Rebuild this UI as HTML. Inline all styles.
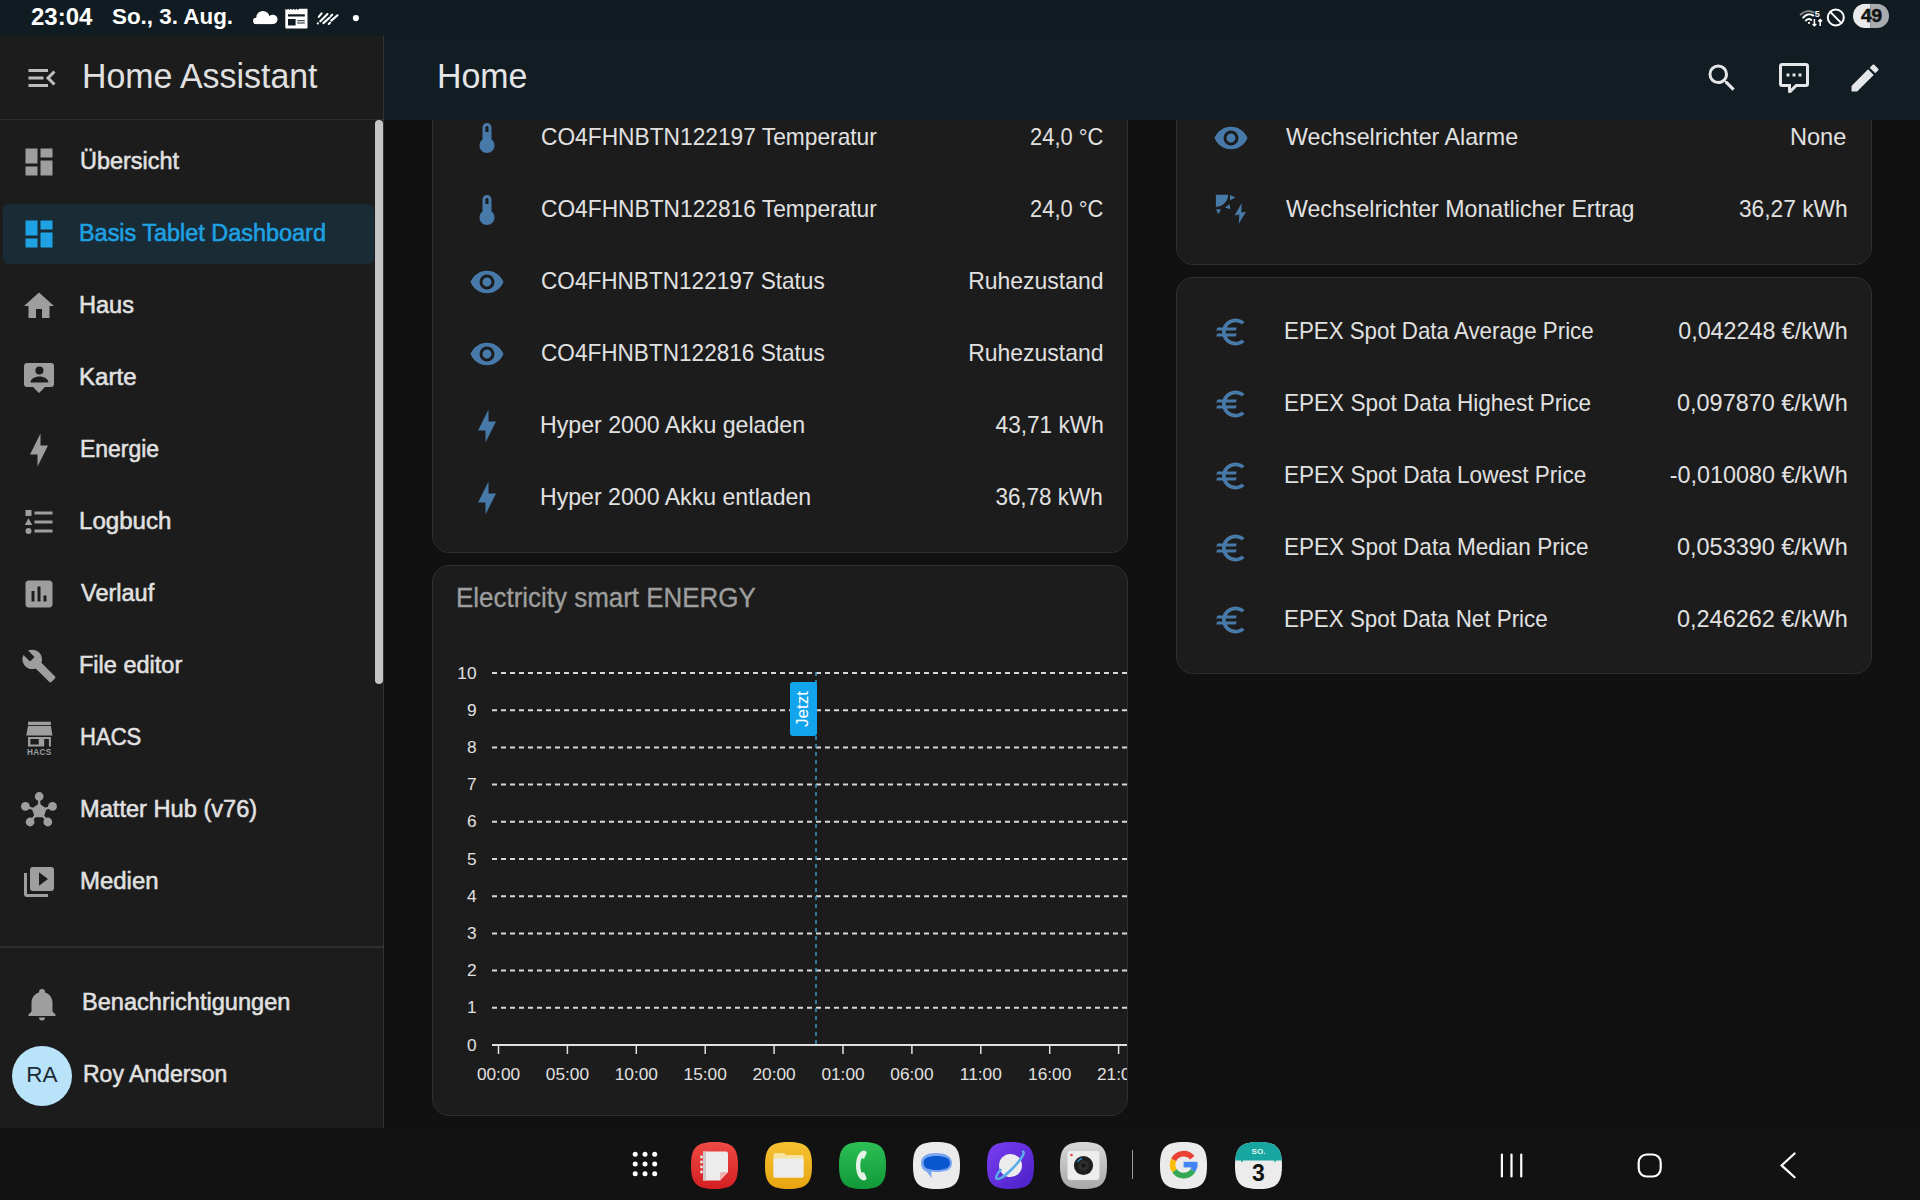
<!DOCTYPE html>
<html><head><meta charset="utf-8"><style>
html,body{margin:0;padding:0;width:1920px;height:1200px;overflow:hidden;background:#111;font-family:"Liberation Sans",sans-serif}
.t{position:absolute;white-space:nowrap;font-family:"Liberation Sans",sans-serif}
svg{display:block}
</style></head><body>
<div style="position:absolute;left:384px;top:120px;width:1536px;height:1008px;background:#111111"></div>
<div style="position:absolute;left:432px;top:60px;width:694px;height:491px;background:#1c1c1c;border:1px solid #2e2e2e;border-radius:17px"></div>
<div style="position:absolute;left:432px;top:565px;width:694px;height:549px;background:#1c1c1c;border:1px solid #2e2e2e;border-radius:17px"></div>
<div style="position:absolute;left:1176px;top:60px;width:694px;height:203px;background:#1c1c1c;border:1px solid #2e2e2e;border-radius:17px"></div>
<div style="position:absolute;left:1176px;top:277px;width:694px;height:395px;background:#1c1c1c;border:1px solid #2e2e2e;border-radius:17px"></div>
<svg style="position:absolute;left:469.0px;top:119.5px;" width="36" height="36" viewBox="0 0 24 24"><path fill="#4779a9" fill-rule="evenodd" d="M15 13V5C15 3.34 13.66 2 12 2S9 3.34 9 5V13C7.79 13.91 7 15.37 7 17C7 19.76 9.24 22 12 22S17 19.76 17 17C17 15.37 16.21 13.91 15 13M11 5C11 4.45 11.45 4 12 4S13 4.45 13 5V8H11V5Z"/></svg>
<div class="t" style="left:540.8px;top:124.5px;font-size:24.0px;line-height:24.0px;color:#e1e1e1;font-weight:400;transform:scaleX(0.9477);transform-origin:0 0;">CO4FHNBTN122197 Temperatur</div>
<div class="t" style="right:817.0px;text-align:right;top:124.5px;font-size:24.0px;line-height:24.0px;color:#e1e1e1;font-weight:400;transform:scaleX(0.9120);transform-origin:100% 0;">24,0 °C</div>
<svg style="position:absolute;left:469.0px;top:191.5px;" width="36" height="36" viewBox="0 0 24 24"><path fill="#4779a9" fill-rule="evenodd" d="M15 13V5C15 3.34 13.66 2 12 2S9 3.34 9 5V13C7.79 13.91 7 15.37 7 17C7 19.76 9.24 22 12 22S17 19.76 17 17C17 15.37 16.21 13.91 15 13M11 5C11 4.45 11.45 4 12 4S13 4.45 13 5V8H11V5Z"/></svg>
<div class="t" style="left:540.8px;top:196.5px;font-size:24.0px;line-height:24.0px;color:#e1e1e1;font-weight:400;transform:scaleX(0.9477);transform-origin:0 0;">CO4FHNBTN122816 Temperatur</div>
<div class="t" style="right:817.0px;text-align:right;top:196.5px;font-size:24.0px;line-height:24.0px;color:#e1e1e1;font-weight:400;transform:scaleX(0.9120);transform-origin:100% 0;">24,0 °C</div>
<svg style="position:absolute;left:469.0px;top:263.5px;" width="36" height="36" viewBox="0 0 24 24"><path fill="#4779a9" fill-rule="evenodd" d="M12,9A3,3 0 0,0 9,12A3,3 0 0,0 12,15A3,3 0 0,0 15,12A3,3 0 0,0 12,9M12,17A5,5 0 0,1 7,12A5,5 0 0,1 12,7A5,5 0 0,1 17,12A5,5 0 0,1 12,17M12,4.5C7,4.5 2.73,7.61 1,12C2.73,16.39 7,19.5 12,19.5C17,19.5 21.27,16.39 23,12C21.27,7.61 17,4.5 12,4.5Z"/></svg>
<div class="t" style="left:540.5px;top:268.5px;font-size:24.0px;line-height:24.0px;color:#e1e1e1;font-weight:400;transform:scaleX(0.9410);transform-origin:0 0;">CO4FHNBTN122197 Status</div>
<div class="t" style="right:816.6px;text-align:right;top:268.5px;font-size:24.0px;line-height:24.0px;color:#e1e1e1;font-weight:400;transform:scaleX(0.9554);transform-origin:100% 0;">Ruhezustand</div>
<svg style="position:absolute;left:469.0px;top:335.5px;" width="36" height="36" viewBox="0 0 24 24"><path fill="#4779a9" fill-rule="evenodd" d="M12,9A3,3 0 0,0 9,12A3,3 0 0,0 12,15A3,3 0 0,0 15,12A3,3 0 0,0 12,9M12,17A5,5 0 0,1 7,12A5,5 0 0,1 12,7A5,5 0 0,1 17,12A5,5 0 0,1 12,17M12,4.5C7,4.5 2.73,7.61 1,12C2.73,16.39 7,19.5 12,19.5C17,19.5 21.27,16.39 23,12C21.27,7.61 17,4.5 12,4.5Z"/></svg>
<div class="t" style="left:540.5px;top:340.5px;font-size:24.0px;line-height:24.0px;color:#e1e1e1;font-weight:400;transform:scaleX(0.9410);transform-origin:0 0;">CO4FHNBTN122816 Status</div>
<div class="t" style="right:816.6px;text-align:right;top:340.5px;font-size:24.0px;line-height:24.0px;color:#e1e1e1;font-weight:400;transform:scaleX(0.9554);transform-origin:100% 0;">Ruhezustand</div>
<svg style="position:absolute;left:469.0px;top:407.5px;" width="36" height="36" viewBox="0 0 24 24"><path fill="#4779a9" fill-rule="evenodd" d="M11 15H6L13 1V9H18L11 23V15Z"/></svg>
<div class="t" style="left:539.5px;top:412.5px;font-size:24.0px;line-height:24.0px;color:#e1e1e1;font-weight:400;transform:scaleX(0.9644);transform-origin:0 0;">Hyper 2000 Akku geladen</div>
<div class="t" style="right:816.6px;text-align:right;top:412.5px;font-size:24.0px;line-height:24.0px;color:#e1e1e1;font-weight:400;transform:scaleX(0.9426);transform-origin:100% 0;">43,71 kWh</div>
<svg style="position:absolute;left:469.0px;top:479.5px;" width="36" height="36" viewBox="0 0 24 24"><path fill="#4779a9" fill-rule="evenodd" d="M11 15H6L13 1V9H18L11 23V15Z"/></svg>
<div class="t" style="left:539.5px;top:484.5px;font-size:24.0px;line-height:24.0px;color:#e1e1e1;font-weight:400;transform:scaleX(0.9633);transform-origin:0 0;">Hyper 2000 Akku entladen</div>
<div class="t" style="right:817.6px;text-align:right;top:484.5px;font-size:24.0px;line-height:24.0px;color:#e1e1e1;font-weight:400;transform:scaleX(0.9355);transform-origin:100% 0;">36,78 kWh</div>
<svg style="position:absolute;left:1213.0px;top:119.5px;" width="36" height="36" viewBox="0 0 24 24"><path fill="#4779a9" fill-rule="evenodd" d="M12,9A3,3 0 0,0 9,12A3,3 0 0,0 12,15A3,3 0 0,0 15,12A3,3 0 0,0 12,9M12,17A5,5 0 0,1 7,12A5,5 0 0,1 12,7A5,5 0 0,1 17,12A5,5 0 0,1 12,17M12,4.5C7,4.5 2.73,7.61 1,12C2.73,16.39 7,19.5 12,19.5C17,19.5 21.27,16.39 23,12C21.27,7.61 17,4.5 12,4.5Z"/></svg>
<div class="t" style="left:1285.5px;top:124.5px;font-size:24.0px;line-height:24.0px;color:#e1e1e1;font-weight:400;transform:scaleX(0.9688);transform-origin:0 0;">Wechselrichter Alarme</div>
<div class="t" style="right:73.2px;text-align:right;top:124.5px;font-size:24.0px;line-height:24.0px;color:#e1e1e1;font-weight:400;transform:scaleX(0.9836);transform-origin:100% 0;">None</div>
<svg style="position:absolute;left:1205px;top:185px;" width="50" height="50" viewBox="0 0 50 50"><g fill="#4779a9"><path d="M10.9 9.8H23.1A12.2 12.1 0 0 1 10.9 21.9Z"/><path d="M25 10L30.6 12.5L25 15.2Z"/><path d="M20 22.5L24.6 19.2L25.4 24.2Z"/><path d="M11 24.2L16 24.2L13.3 29.2Z"/><path d="M36.7 17.9L29.6 30.4L34.3 29.6L33.75 38.75L41 26.7L36.4 27.4Z"/></g></svg>
<div class="t" style="left:1285.5px;top:196.5px;font-size:24.0px;line-height:24.0px;color:#e1e1e1;font-weight:400;transform:scaleX(0.9653);transform-origin:0 0;">Wechselrichter Monatlicher Ertrag</div>
<div class="t" style="right:72.2px;text-align:right;top:196.5px;font-size:24.0px;line-height:24.0px;color:#e1e1e1;font-weight:400;transform:scaleX(0.9484);transform-origin:100% 0;">36,27 kWh</div>
<svg style="position:absolute;left:1213.0px;top:314.0px;" width="36" height="36" viewBox="0 0 24 24"><path fill="#4779a9" fill-rule="evenodd" d="M15,18.5C12.49,18.5 10.32,17.08 9.24,15H15L16,13H8.58C8.53,12.67 8.5,12.34 8.5,12C8.5,11.66 8.53,11.33 8.58,11H15L16,9H9.24C10.32,6.92 12.5,5.5 15,5.5C16.61,5.5 18.09,6.09 19.23,7.07L21,5.3C19.41,3.87 17.3,3 15,3C11.08,3 7.760,5.5 6.52,9H3L2,11H6.06C6.02,11.33 6,11.66 6,12C6,12.34 6.02,12.67 6.06,13H3L2,15H6.52C7.76,18.5 11.08,21 15,21C17.31,21 19.41,20.13 21,18.7L19.22,16.93C18.09,17.91 16.62,18.5 15,18.5Z"/></svg>
<div class="t" style="left:1284.0px;top:319.0px;font-size:24.0px;line-height:24.0px;color:#e1e1e1;font-weight:400;transform:scaleX(0.9297);transform-origin:0 0;">EPEX Spot Data Average Price</div>
<div class="t" style="right:72.0px;text-align:right;top:319.0px;font-size:24.0px;line-height:24.0px;color:#e1e1e1;font-weight:400;transform:scaleX(0.9702);transform-origin:100% 0;">0,042248 €/kWh</div>
<svg style="position:absolute;left:1213.0px;top:386.0px;" width="36" height="36" viewBox="0 0 24 24"><path fill="#4779a9" fill-rule="evenodd" d="M15,18.5C12.49,18.5 10.32,17.08 9.24,15H15L16,13H8.58C8.53,12.67 8.5,12.34 8.5,12C8.5,11.66 8.53,11.33 8.58,11H15L16,9H9.24C10.32,6.92 12.5,5.5 15,5.5C16.61,5.5 18.09,6.09 19.23,7.07L21,5.3C19.41,3.87 17.3,3 15,3C11.08,3 7.760,5.5 6.52,9H3L2,11H6.06C6.02,11.33 6,11.66 6,12C6,12.34 6.02,12.67 6.06,13H3L2,15H6.52C7.76,18.5 11.08,21 15,21C17.31,21 19.41,20.13 21,18.7L19.22,16.93C18.09,17.91 16.62,18.5 15,18.5Z"/></svg>
<div class="t" style="left:1283.8px;top:391.0px;font-size:24.0px;line-height:24.0px;color:#e1e1e1;font-weight:400;transform:scaleX(0.9395);transform-origin:0 0;">EPEX Spot Data Highest Price</div>
<div class="t" style="right:72.1px;text-align:right;top:391.0px;font-size:24.0px;line-height:24.0px;color:#e1e1e1;font-weight:400;transform:scaleX(0.9771);transform-origin:100% 0;">0,097870 €/kWh</div>
<svg style="position:absolute;left:1213.0px;top:458.0px;" width="36" height="36" viewBox="0 0 24 24"><path fill="#4779a9" fill-rule="evenodd" d="M15,18.5C12.49,18.5 10.32,17.08 9.24,15H15L16,13H8.58C8.53,12.67 8.5,12.34 8.5,12C8.5,11.66 8.53,11.33 8.58,11H15L16,9H9.24C10.32,6.92 12.5,5.5 15,5.5C16.61,5.5 18.09,6.09 19.23,7.07L21,5.3C19.41,3.87 17.3,3 15,3C11.08,3 7.760,5.5 6.52,9H3L2,11H6.06C6.02,11.33 6,11.66 6,12C6,12.34 6.02,12.67 6.06,13H3L2,15H6.52C7.76,18.5 11.08,21 15,21C17.31,21 19.41,20.13 21,18.7L19.22,16.93C18.09,17.91 16.62,18.5 15,18.5Z"/></svg>
<div class="t" style="left:1283.8px;top:463.0px;font-size:24.0px;line-height:24.0px;color:#e1e1e1;font-weight:400;transform:scaleX(0.9400);transform-origin:0 0;">EPEX Spot Data Lowest Price</div>
<div class="t" style="right:72.1px;text-align:right;top:463.0px;font-size:24.0px;line-height:24.0px;color:#e1e1e1;font-weight:400;transform:scaleX(0.9746);transform-origin:100% 0;">-0,010080 €/kWh</div>
<svg style="position:absolute;left:1213.0px;top:530.0px;" width="36" height="36" viewBox="0 0 24 24"><path fill="#4779a9" fill-rule="evenodd" d="M15,18.5C12.49,18.5 10.32,17.08 9.24,15H15L16,13H8.58C8.53,12.67 8.5,12.34 8.5,12C8.5,11.66 8.53,11.33 8.58,11H15L16,9H9.24C10.32,6.92 12.5,5.5 15,5.5C16.61,5.5 18.09,6.09 19.23,7.07L21,5.3C19.41,3.87 17.3,3 15,3C11.08,3 7.760,5.5 6.52,9H3L2,11H6.06C6.02,11.33 6,11.66 6,12C6,12.34 6.02,12.67 6.06,13H3L2,15H6.52C7.76,18.5 11.08,21 15,21C17.31,21 19.41,20.13 21,18.7L19.22,16.93C18.09,17.91 16.62,18.5 15,18.5Z"/></svg>
<div class="t" style="left:1283.8px;top:535.0px;font-size:24.0px;line-height:24.0px;color:#e1e1e1;font-weight:400;transform:scaleX(0.9394);transform-origin:0 0;">EPEX Spot Data Median Price</div>
<div class="t" style="right:72.1px;text-align:right;top:535.0px;font-size:24.0px;line-height:24.0px;color:#e1e1e1;font-weight:400;transform:scaleX(0.9771);transform-origin:100% 0;">0,053390 €/kWh</div>
<svg style="position:absolute;left:1213.0px;top:602.0px;" width="36" height="36" viewBox="0 0 24 24"><path fill="#4779a9" fill-rule="evenodd" d="M15,18.5C12.49,18.5 10.32,17.08 9.24,15H15L16,13H8.58C8.53,12.67 8.5,12.34 8.5,12C8.5,11.66 8.53,11.33 8.58,11H15L16,9H9.24C10.32,6.92 12.5,5.5 15,5.5C16.61,5.5 18.09,6.09 19.23,7.07L21,5.3C19.41,3.87 17.3,3 15,3C11.08,3 7.760,5.5 6.52,9H3L2,11H6.06C6.02,11.33 6,11.66 6,12C6,12.34 6.02,12.67 6.06,13H3L2,15H6.52C7.76,18.5 11.08,21 15,21C17.31,21 19.41,20.13 21,18.7L19.22,16.93C18.09,17.91 16.62,18.5 15,18.5Z"/></svg>
<div class="t" style="left:1283.8px;top:607.0px;font-size:24.0px;line-height:24.0px;color:#e1e1e1;font-weight:400;transform:scaleX(0.9325);transform-origin:0 0;">EPEX Spot Data Net Price</div>
<div class="t" style="right:72.1px;text-align:right;top:607.0px;font-size:24.0px;line-height:24.0px;color:#e1e1e1;font-weight:400;transform:scaleX(0.9771);transform-origin:100% 0;">0,246262 €/kWh</div>
<div class="t" style="left:456.0px;top:583.8px;font-size:27.4px;line-height:27.4px;color:#9e9e9e;font-weight:400;-webkit-text-stroke:0.35px #9e9e9e;transform:scaleX(0.9471);transform-origin:0 0;">Electricity smart ENERGY</div>
<svg style="position:absolute;left:0px;top:0px;" width="1920" height="1200" viewBox="0 0 1920 1200"><line x1="492" y1="1045.0" x2="1127" y2="1045.0" stroke="#e0e0e0" stroke-width="2"/><line x1="492" y1="1007.8" x2="1127" y2="1007.8" stroke="#d8d8d8" stroke-width="2" stroke-dasharray="5 4"/><line x1="492" y1="970.6" x2="1127" y2="970.6" stroke="#d8d8d8" stroke-width="2" stroke-dasharray="5 4"/><line x1="492" y1="933.4" x2="1127" y2="933.4" stroke="#d8d8d8" stroke-width="2" stroke-dasharray="5 4"/><line x1="492" y1="896.2" x2="1127" y2="896.2" stroke="#d8d8d8" stroke-width="2" stroke-dasharray="5 4"/><line x1="492" y1="859.0" x2="1127" y2="859.0" stroke="#d8d8d8" stroke-width="2" stroke-dasharray="5 4"/><line x1="492" y1="821.8" x2="1127" y2="821.8" stroke="#d8d8d8" stroke-width="2" stroke-dasharray="5 4"/><line x1="492" y1="784.6" x2="1127" y2="784.6" stroke="#d8d8d8" stroke-width="2" stroke-dasharray="5 4"/><line x1="492" y1="747.4" x2="1127" y2="747.4" stroke="#d8d8d8" stroke-width="2" stroke-dasharray="5 4"/><line x1="492" y1="710.2" x2="1127" y2="710.2" stroke="#d8d8d8" stroke-width="2" stroke-dasharray="5 4"/><line x1="492" y1="673.0" x2="1127" y2="673.0" stroke="#d8d8d8" stroke-width="2" stroke-dasharray="5 4"/><line x1="498.5" y1="1045" x2="498.5" y2="1054" stroke="#e0e0e0" stroke-width="1.5"/><line x1="567.4" y1="1045" x2="567.4" y2="1054" stroke="#e0e0e0" stroke-width="1.5"/><line x1="636.3" y1="1045" x2="636.3" y2="1054" stroke="#e0e0e0" stroke-width="1.5"/><line x1="705.2" y1="1045" x2="705.2" y2="1054" stroke="#e0e0e0" stroke-width="1.5"/><line x1="774.1" y1="1045" x2="774.1" y2="1054" stroke="#e0e0e0" stroke-width="1.5"/><line x1="843.0" y1="1045" x2="843.0" y2="1054" stroke="#e0e0e0" stroke-width="1.5"/><line x1="911.9" y1="1045" x2="911.9" y2="1054" stroke="#e0e0e0" stroke-width="1.5"/><line x1="980.8" y1="1045" x2="980.8" y2="1054" stroke="#e0e0e0" stroke-width="1.5"/><line x1="1049.7" y1="1045" x2="1049.7" y2="1054" stroke="#e0e0e0" stroke-width="1.5"/><line x1="1118.6" y1="1045" x2="1118.6" y2="1054" stroke="#e0e0e0" stroke-width="1.5"/><line x1="816" y1="672" x2="816" y2="1045" stroke="#3499d2" stroke-width="1.5" stroke-dasharray="4 4"/></svg>
<div class="t" style="right:1443.5px;text-align:right;top:1036.6px;font-size:17.3px;line-height:17.3px;color:#e1e1e1;font-weight:400;">0</div>
<div class="t" style="right:1443.5px;text-align:right;top:999.4px;font-size:17.3px;line-height:17.3px;color:#e1e1e1;font-weight:400;">1</div>
<div class="t" style="right:1443.5px;text-align:right;top:962.2px;font-size:17.3px;line-height:17.3px;color:#e1e1e1;font-weight:400;">2</div>
<div class="t" style="right:1443.5px;text-align:right;top:925.0px;font-size:17.3px;line-height:17.3px;color:#e1e1e1;font-weight:400;">3</div>
<div class="t" style="right:1443.5px;text-align:right;top:887.8px;font-size:17.3px;line-height:17.3px;color:#e1e1e1;font-weight:400;">4</div>
<div class="t" style="right:1443.5px;text-align:right;top:850.6px;font-size:17.3px;line-height:17.3px;color:#e1e1e1;font-weight:400;">5</div>
<div class="t" style="right:1443.5px;text-align:right;top:813.4px;font-size:17.3px;line-height:17.3px;color:#e1e1e1;font-weight:400;">6</div>
<div class="t" style="right:1443.5px;text-align:right;top:776.2px;font-size:17.3px;line-height:17.3px;color:#e1e1e1;font-weight:400;">7</div>
<div class="t" style="right:1443.5px;text-align:right;top:739.0px;font-size:17.3px;line-height:17.3px;color:#e1e1e1;font-weight:400;">8</div>
<div class="t" style="right:1443.5px;text-align:right;top:701.8px;font-size:17.3px;line-height:17.3px;color:#e1e1e1;font-weight:400;">9</div>
<div class="t" style="right:1443.5px;text-align:right;top:664.6px;font-size:17.3px;line-height:17.3px;color:#e1e1e1;font-weight:400;">10</div>
<div style="position:absolute;left:432px;top:1050px;width:695px;height:40px;overflow:hidden">
<div class="t" style="left:6.5px;width:120px;text-align:center;top:16.0px;font-size:17.3px;line-height:17.3px;color:#e1e1e1">00:00</div>
<div class="t" style="left:75.4px;width:120px;text-align:center;top:16.0px;font-size:17.3px;line-height:17.3px;color:#e1e1e1">05:00</div>
<div class="t" style="left:144.3px;width:120px;text-align:center;top:16.0px;font-size:17.3px;line-height:17.3px;color:#e1e1e1">10:00</div>
<div class="t" style="left:213.2px;width:120px;text-align:center;top:16.0px;font-size:17.3px;line-height:17.3px;color:#e1e1e1">15:00</div>
<div class="t" style="left:282.1px;width:120px;text-align:center;top:16.0px;font-size:17.3px;line-height:17.3px;color:#e1e1e1">20:00</div>
<div class="t" style="left:351.0px;width:120px;text-align:center;top:16.0px;font-size:17.3px;line-height:17.3px;color:#e1e1e1">01:00</div>
<div class="t" style="left:419.9px;width:120px;text-align:center;top:16.0px;font-size:17.3px;line-height:17.3px;color:#e1e1e1">06:00</div>
<div class="t" style="left:488.8px;width:120px;text-align:center;top:16.0px;font-size:17.3px;line-height:17.3px;color:#e1e1e1">11:00</div>
<div class="t" style="left:557.7px;width:120px;text-align:center;top:16.0px;font-size:17.3px;line-height:17.3px;color:#e1e1e1">16:00</div>
<div class="t" style="left:626.6px;width:120px;text-align:center;top:16.0px;font-size:17.3px;line-height:17.3px;color:#e1e1e1">21:00</div>
</div>
<div style="position:absolute;left:790px;top:682px;width:27px;height:54px;background:#12a4ec;border-radius:3px"></div>
<div class="t" style="left:776px;top:700px;width:54px;height:18px;font-size:17px;line-height:18px;text-align:center;color:#fff;transform:rotate(-90deg)">Jetzt</div>
<div style="position:absolute;left:384px;top:36px;width:1536px;height:84px;background:#111c23"></div>
<div class="t" style="left:436.9px;top:58.3px;font-size:35.0px;line-height:35.0px;color:#e4e6e8;font-weight:400;transform:scaleX(0.9690);transform-origin:0 0;">Home</div>
<svg style="position:absolute;left:1703.5px;top:59.7px;" width="36" height="36" viewBox="0 0 24 24"><path fill="#e4e6e8" fill-rule="evenodd" d="M9.5,3A6.5,6.5 0 0,1 16,9.5C16,11.11 15.41,12.59 14.44,13.73L14.71,14H15.5L20.5,19L19,20.5L14,15.5V14.71L13.73,14.44C12.59,15.41 11.11,16 9.5,16A6.5,6.5 0 0,1 3,9.5A6.5,6.5 0 0,1 9.5,3M9.5,5C7,5 5,7 5,9.5C5,12 7,14 9.5,14C12,14 14,12 14,9.5C14,7 12,5 9.5,5Z"/></svg>
<svg style="position:absolute;left:1776.0px;top:59.9px;" width="36" height="36" viewBox="0 0 24 24"><path fill="#e4e6e8" fill-rule="evenodd" d="M9,22A1,1 0 0,1 8,21V18H4A2,2 0 0,1 2,16V4C2,2.89 2.9,2 4,2H20A2,2 0 0,1 22,4V16A2,2 0 0,1 20,18H13.9L10.2,21.71C10,21.9 9.75,22 9.5,22V22H9M10,16V19.08L13.08,16H20V4H4V16H10M17,11H15V9H17V11M13,11H11V9H13V11M9,11H7V9H9V11Z"/></svg>
<svg style="position:absolute;left:1847.4px;top:60.0px;" width="36" height="36" viewBox="0 0 24 24"><path fill="#e4e6e8" fill-rule="evenodd" d="M20.71,7.04C21.1,6.65 21.1,6 20.71,5.63L18.37,3.29C18,2.9 17.35,2.9 16.96,3.29L15.12,5.12L18.87,8.87M3,17.25V21H6.75L17.81,9.93L14.06,6.18L3,17.25Z"/></svg>
<div style="position:absolute;left:0px;top:36px;width:384px;height:1092px;background:#1c1c1c"></div>
<div style="position:absolute;left:383px;top:36px;width:1px;height:1092px;background:#333333"></div>
<div style="position:absolute;left:0px;top:119px;width:383px;height:1px;background:#2f2f2f"></div>
<svg style="position:absolute;left:23.5px;top:59.8px;" width="36" height="36" viewBox="0 0 24 24"><path fill="#bdbdbd" fill-rule="evenodd" d="M21,15.61L19.59,17L14.58,12L19.59,7L21,8.39L17.44,12L21,15.61M3,6H16V8H3V6M3,13V11H13V13H3M3,18V16H16V18H3Z"/></svg>
<div class="t" style="left:81.6px;top:58.0px;font-size:35.3px;line-height:35.3px;color:#e1e1e1;font-weight:400;transform:scaleX(0.9605);transform-origin:0 0;">Home Assistant</div>
<div style="position:absolute;left:375px;top:120px;width:8px;height:564px;background:#c4c4c4;border-radius:4px"></div>
<div style="position:absolute;left:3px;top:204px;width:371px;height:60px;background:#192c36;border-radius:6px"></div>
<svg style="position:absolute;left:20.6px;top:144.0px;" width="36" height="36" viewBox="0 0 24 24"><path fill="#9e9e9e" fill-rule="evenodd" d="M13,3V9H21V3M13,21H21V11H13M3,21H11V15H3M3,13H11V3H3V13Z"/></svg>
<div class="t" style="left:79.8px;top:148.5px;font-size:24.2px;line-height:24.2px;color:#e1e1e1;font-weight:400;-webkit-text-stroke:0.55px #e1e1e1;transform:scaleX(0.9687);transform-origin:0 0;">Übersicht</div>
<svg style="position:absolute;left:20.6px;top:216.0px;" width="36" height="36" viewBox="0 0 24 24"><path fill="#1ea2e4" fill-rule="evenodd" d="M13,3V9H21V3M13,21H21V11H13M3,21H11V15H3M3,13H11V3H3V13Z"/></svg>
<div class="t" style="left:78.8px;top:220.5px;font-size:24.2px;line-height:24.2px;color:#1ea2e4;font-weight:400;-webkit-text-stroke:0.55px #1ea2e4;transform:scaleX(0.9683);transform-origin:0 0;">Basis Tablet Dashboard</div>
<svg style="position:absolute;left:20.6px;top:288.0px;" width="36" height="36" viewBox="0 0 24 24"><path fill="#9e9e9e" fill-rule="evenodd" d="M10,20V14H14V20H19V12H22L12,3L2,12H5V20H10Z"/></svg>
<div class="t" style="left:79.4px;top:292.5px;font-size:24.2px;line-height:24.2px;color:#e1e1e1;font-weight:400;-webkit-text-stroke:0.55px #e1e1e1;transform:scaleX(0.9736);transform-origin:0 0;">Haus</div>
<svg style="position:absolute;left:20.6px;top:360.0px;" width="36" height="36" viewBox="0 0 24 24"><path fill="#9e9e9e" fill-rule="evenodd" d="M2,4C2,2.89 2.9,2 4,2H20A2,2 0 0,1 22,4V16A2,2 0 0,1 20,18H16L12,22L8,18H4A2,2 0 0,1 2,16V4M18.3,15C18.3,12.5 15.2,11 12.3,11C9.4,11 6.3,12.5 6.3,15H18.3M12.3,4.3A2.7,2.7 0 0,0 9.6,7A2.7,2.7 0 0,0 12.3,9.7A2.7,2.7 0 0,0 15,7A2.7,2.7 0 0,0 12.3,4.3Z"/></svg>
<div class="t" style="left:79.3px;top:364.5px;font-size:24.2px;line-height:24.2px;color:#e1e1e1;font-weight:400;-webkit-text-stroke:0.55px #e1e1e1;transform:scaleX(0.9949);transform-origin:0 0;">Karte</div>
<svg style="position:absolute;left:20.6px;top:432.0px;" width="36" height="36" viewBox="0 0 24 24"><path fill="#9e9e9e" fill-rule="evenodd" d="M11 15H6L13 1V9H18L11 23V15Z"/></svg>
<div class="t" style="left:80.4px;top:436.5px;font-size:24.2px;line-height:24.2px;color:#e1e1e1;font-weight:400;-webkit-text-stroke:0.55px #e1e1e1;transform:scaleX(0.9489);transform-origin:0 0;">Energie</div>
<svg style="position:absolute;left:20.6px;top:504.0px;" width="36" height="36" viewBox="0 0 24 24"><path fill="#9e9e9e" fill-rule="evenodd" d="M5,9.5L7.5,14H2.5L5,9.5M3,4H7V8H3V4M5,20A2,2 0 0,0 7,18A2,2 0 0,0 5,16A2,2 0 0,0 3,18A2,2 0 0,0 5,20M9,5V7H21V5H9M9,19H21V17H9V19M9,13H21V11H9V13Z"/></svg>
<div class="t" style="left:79.3px;top:508.5px;font-size:24.2px;line-height:24.2px;color:#e1e1e1;font-weight:400;-webkit-text-stroke:0.55px #e1e1e1;transform:scaleX(0.9966);transform-origin:0 0;">Logbuch</div>
<svg style="position:absolute;left:20.6px;top:576.0px;" width="36" height="36" viewBox="0 0 24 24"><path fill="#9e9e9e" fill-rule="evenodd" d="M19 3H5C3.9 3 3 3.9 3 5V19C3 20.1 3.9 21 5 21H19C20.1 21 21 20.1 21 19V5C21 3.9 20.1 3 19 3M9 17H7V10H9V17M13 17H11V7H13V17M17 17H15V13H17V17Z"/></svg>
<div class="t" style="left:81.4px;top:580.5px;font-size:24.2px;line-height:24.2px;color:#e1e1e1;font-weight:400;-webkit-text-stroke:0.55px #e1e1e1;transform:scaleX(0.9718);transform-origin:0 0;">Verlauf</div>
<svg style="position:absolute;left:20.6px;top:648.0px;" width="36" height="36" viewBox="0 0 24 24"><path fill="#9e9e9e" fill-rule="evenodd" d="M22.7,19L13.6,9.9C14.5,7.6 14,4.9 12.1,3C10.1,1 7.1,0.6 4.7,1.7L9,6L6,9L1.6,4.7C0.4,7.1 0.9,10.1 2.9,12.1C4.8,14 7.5,14.5 9.8,13.6L18.9,22.7C19.3,23.1 19.9,23.1 20.3,22.7L22.6,20.4C23.1,20 23.1,19.3 22.7,19Z"/></svg>
<div class="t" style="left:79.2px;top:652.5px;font-size:24.2px;line-height:24.2px;color:#e1e1e1;font-weight:400;-webkit-text-stroke:0.55px #e1e1e1;transform:scaleX(0.9722);transform-origin:0 0;">File editor</div>
<svg style="position:absolute;left:15px;top:710px;" width="50" height="125" viewBox="0 0 50 125"><g fill="#9e9e9e"><path d="M13 11.7H35.9V15.1H13Z"/><path d="M13 16.1H35.9L37.5 25.5H11.25Z"/><path fill-rule="evenodd" d="M13 26.9H35.9V36.5H13Z M15.4 29H23.75V34.4H15.4Z M29.2 29H33.9V36.5H29.2Z"/></g><text x="24.3" y="45.2" font-family="Liberation Sans" font-size="8.2" font-weight="700" letter-spacing="0.4" fill="#9e9e9e" text-anchor="middle">HACS</text></svg>
<div class="t" style="left:80.3px;top:724.5px;font-size:24.2px;line-height:24.2px;color:#e1e1e1;font-weight:400;-webkit-text-stroke:0.55px #e1e1e1;transform:scaleX(0.9125);transform-origin:0 0;">HACS</div>
<svg style="position:absolute;left:15px;top:710px;" width="50" height="125" viewBox="0 0 50 125"><g stroke="#9e9e9e" stroke-width="2.2"><path d="M24.2 101L24.2 86.5M24.2 101L10.4 96.4M24.2 101L37.5 96.4M24.2 101L15.1 112M24.2 101L32.8 112"/></g><g fill="#9e9e9e"><circle cx="24.2" cy="86.5" r="4.4"/><circle cx="10.4" cy="96.4" r="4.4"/><circle cx="37.5" cy="96.4" r="4.4"/><circle cx="15.1" cy="112" r="4.4"/><circle cx="32.8" cy="112" r="4.4"/><path d="M24.2 94.3L30.6 98.9L28.1 106.4H20.3L17.8 98.9Z" stroke="#9e9e9e" stroke-width="1.6" stroke-linejoin="round"/></g></svg>
<div class="t" style="left:79.8px;top:796.5px;font-size:24.2px;line-height:24.2px;color:#e1e1e1;font-weight:400;-webkit-text-stroke:0.55px #e1e1e1;transform:scaleX(0.9766);transform-origin:0 0;">Matter Hub (v76)</div>
<svg style="position:absolute;left:20.6px;top:864.0px;" width="36" height="36" viewBox="0 0 24 24"><path fill="#9e9e9e" fill-rule="evenodd" d="M4,6H2V20A2,2 0 0,0 4,22H18V20H4V6M20,2H8A2,2 0 0,0 6,4V16A2,2 0 0,0 8,18H20A2,2 0 0,0 22,16V4A2,2 0 0,0 20,2M12,14.5V5.5L18,10L12,14.5Z"/></svg>
<div class="t" style="left:80.1px;top:868.5px;font-size:24.2px;line-height:24.2px;color:#e1e1e1;font-weight:400;-webkit-text-stroke:0.55px #e1e1e1;transform:scaleX(0.9903);transform-origin:0 0;">Medien</div>
<div style="position:absolute;left:0px;top:946px;width:383px;height:1.5px;background:#2f2f2f"></div>
<svg style="position:absolute;left:23.5px;top:985.6px;" width="36" height="36" viewBox="0 0 24 24"><path fill="#9e9e9e" fill-rule="evenodd" d="M21,19V20H3V19L5,17V11C5,7.9 7.03,5.17 10,4.29C10,4.19 10,4.1 10,4A2,2 0 0,1 12,2A2,2 0 0,1 14,4C14,4.1 14,4.19 14,4.29C16.97,5.17 19,7.9 19,11V17L21,19M14,21A2,2 0 0,1 12,23A2,2 0 0,1 10,21"/></svg>
<div class="t" style="left:82.3px;top:989.5px;font-size:24.2px;line-height:24.2px;color:#e1e1e1;font-weight:400;-webkit-text-stroke:0.55px #e1e1e1;transform:scaleX(0.9745);transform-origin:0 0;">Benachrichtigungen</div>
<div style="position:absolute;left:12px;top:1046px;width:60px;height:60px;border-radius:50%;background:#b9e3f9"></div>
<div class="t" style="left:-258.0px;width:600px;text-align:center;top:1064.0px;font-size:22.5px;line-height:22.5px;color:#1d2b36;font-weight:400;">RA</div>
<div class="t" style="left:83.3px;top:1061.5px;font-size:24.2px;line-height:24.2px;color:#e1e1e1;font-weight:400;-webkit-text-stroke:0.55px #e1e1e1;transform:scaleX(0.9503);transform-origin:0 0;">Roy Anderson</div>
<div style="position:absolute;left:0px;top:0px;width:1920px;height:36px;background:#111c22"></div>
<div class="t" style="left:31.0px;top:5.0px;font-size:24px;line-height:24px;color:#fff;font-weight:700;">23:04</div>
<div class="t" style="left:112.0px;top:6.3px;font-size:22.4px;line-height:22.4px;color:#fff;font-weight:700;">So., 3. Aug.</div>
<svg style="position:absolute;left:245px;top:0px;" width="120" height="36" viewBox="0 0 120 36"><g fill="#fff">
<circle cx="11.3" cy="20.9" r="3.2"/><circle cx="17.9" cy="17.5" r="6.6"/><circle cx="27.8" cy="19.4" r="4.7"/><rect x="11.3" y="17.5" width="16.5" height="6.6"/>
<path fill-rule="evenodd" d="M40.3 8.8L41.7 10L43.1 8.8L44.5 10L45.9 8.8L47.3 10L48.7 8.8L50.1 10L51.5 8.8L52.9 10L54.3 8.8L62.5 8.8V27.4A1 1 0 0 1 61.5 28.4H41.3A1 1 0 0 1 40.3 27.4Z M43 14.3H59.8V16.6H43Z M43 19H50.6V25.6H43Z M52.2 20.3H59.8V21.3H52.2Z M52.2 22.6H59.8V23.4H52.2Z"/>
<circle cx="110.9" cy="18.1" r="3.1"/>
</g>
<g stroke="#fff" stroke-width="2.1" stroke-linecap="round" fill="none">
<path d="M72.8 23.4L72.9 23.3M73.75 16.9L76.6 13.4M75.3 21.25L82.5 14M78.4 23.1L84.7 17.5M85.9 15.9L87.2 14.7M83.75 24L85 22.8M86.25 20.6L92.5 15.3"/>
</g></svg>
<svg style="position:absolute;left:1790px;top:0px;" width="110" height="36" viewBox="0 0 110 36">
<g fill="none" stroke-linecap="round">
<path d="M10.6 14.6A11 11 0 0 1 23.5 12.4" stroke="#8a8d90" stroke-width="1.9"/>
<path d="M13.2 17.6A7.4 7.4 0 0 1 23.3 15.6" stroke="#fff" stroke-width="1.9"/>
<path d="M15.9 20.6A3.8 3.8 0 0 1 21.3 19.9" stroke="#fff" stroke-width="1.9"/>
<circle cx="45.8" cy="17.5" r="8" stroke="#fff" stroke-width="2"/>
<path d="M40.2 11.9L51.4 23.1" stroke="#fff" stroke-width="2"/>
</g>
<circle cx="19" cy="22.9" r="1.1" fill="#fff"/>
<text x="27.3" y="17.2" font-family="Liberation Sans" font-size="9" font-weight="700" fill="#fff" text-anchor="middle">5</text>
<g stroke="#fff" stroke-width="1.5" fill="none"><path d="M24.4 19v6.6M22.6 24L24.4 25.8L26.2 24M30.2 26V19.8M28.4 21.4L30.2 19.6L32 21.4"/></g>
<clipPath id="bp"><rect x="63" y="3.7" width="36" height="24.4" rx="12.2"/></clipPath>
<g clip-path="url(#bp)"><rect x="63" y="3.7" width="17.2" height="24.4" fill="#e8eaec"/><rect x="80.2" y="3.7" width="19" height="24.4" fill="#a9acaf"/></g>
<text x="81.6" y="22" font-family="Liberation Sans" font-size="19" font-weight="700" fill="#111" stroke="#111" stroke-width="0.5" text-anchor="middle">49</text>
</svg>
<div style="position:absolute;left:0px;top:1128px;width:1920px;height:72px;background:#121212"></div>
<svg style="position:absolute;left:0px;top:0px;" width="1920" height="1200" viewBox="0 0 1920 1200"><circle cx="635.2" cy="1154.2" r="2.5" fill="#fff"/><circle cx="635.2" cy="1164.1" r="2.5" fill="#fff"/><circle cx="635.2" cy="1173.7" r="2.5" fill="#fff"/><circle cx="645" cy="1154.2" r="2.5" fill="#fff"/><circle cx="645" cy="1164.1" r="2.5" fill="#fff"/><circle cx="645" cy="1173.7" r="2.5" fill="#fff"/><circle cx="654.7" cy="1154.2" r="2.5" fill="#fff"/><circle cx="654.7" cy="1164.1" r="2.5" fill="#fff"/><circle cx="654.7" cy="1173.7" r="2.5" fill="#fff"/></svg>
<svg style="position:absolute;left:690.6px;top:1142px;" width="47" height="47" viewBox="0 0 47 47"><defs><linearGradient id="gr" x1="0" y1="0" x2="0" y2="1"><stop offset="0" stop-color="#ee4a44"/><stop offset="1" stop-color="#d41f22"/></linearGradient></defs><path d="M23.5 0C41.5 0 47 5.5 47 23.5S41.5 47 23.5 47S0 41.5 0 23.5S5.5 0 23.5 0Z" fill="url(#gr)"/>
<path d="M12 9.5H35A2 2 0 0 1 37 11.5V30L29 38.5H12Z" fill="#ececec"/><path d="M29 38.5V32A2 2 0 0 1 31 30H37Z" fill="#f0b0b0"/><path d="M12 9.5h3v29h-3z" fill="#d0c8c8"/>
<g fill="#ececec"><circle cx="10.5" cy="15" r="1.4"/><circle cx="10.5" cy="20" r="1.4"/><circle cx="10.5" cy="25" r="1.4"/><circle cx="10.5" cy="30" r="1.4"/></g></svg>
<svg style="position:absolute;left:764.8px;top:1142px;" width="47" height="47" viewBox="0 0 47 47"><defs><linearGradient id="gy" x1="0" y1="0" x2="0" y2="1"><stop offset="0" stop-color="#f5c232"/><stop offset="1" stop-color="#e8a410"/></linearGradient></defs><path d="M23.5 0C41.5 0 47 5.5 47 23.5S41.5 47 23.5 47S0 41.5 0 23.5S5.5 0 23.5 0Z" fill="url(#gy)"/>
<path d="M8.5 12.5A1.5 1.5 0 0 1 10 11H19L21 13H37A1.5 1.5 0 0 1 38.5 14.5V34A1.5 1.5 0 0 1 37 35.5H10A1.5 1.5 0 0 1 8.5 34Z" fill="#f7e3a0"/><path d="M8.5 16.5H38.5V34A1.5 1.5 0 0 1 37 35.5H10A1.5 1.5 0 0 1 8.5 34Z" fill="#ececec"/></svg>
<svg style="position:absolute;left:838.8px;top:1142px;" width="47" height="47" viewBox="0 0 47 47"><defs><linearGradient id="gg" x1="0" y1="0" x2="0" y2="1"><stop offset="0" stop-color="#2cc055"/><stop offset="1" stop-color="#119838"/></linearGradient></defs><path d="M23.5 0C41.5 0 47 5.5 47 23.5S41.5 47 23.5 47S0 41.5 0 23.5S5.5 0 23.5 0Z" fill="url(#gg)"/>
<path d="M24.5 8.5C21 9 17 14 17 23.5S21 38 24.5 38.5C26.5 38.6 27.5 37.5 27.7 36.3L25.5 31C24.8 30 23.5 30.2 22.6 30.8C21.6 28 21.3 25.5 21.3 23.5S21.6 19 22.6 16.2C23.5 16.8 24.8 17 25.5 16L27.7 10.7C27.5 9.5 26.5 8.4 24.5 8.5Z" fill="#e6f2e8"/></svg>
<svg style="position:absolute;left:912.8px;top:1142px;" width="47" height="47" viewBox="0 0 47 47"><path d="M23.5 0C41.5 0 47 5.5 47 23.5S41.5 47 23.5 47S0 41.5 0 23.5S5.5 0 23.5 0Z" fill="#ebebeb"/>
<path d="M8 21C8 14 14 11 23 11S39 14 39 21S33 30 23 30C21 30 19.5 29.8 18.5 29.5V36L14 30C10 28.5 8 25 8 21Z" fill="#7aa6f0"/><path d="M10.5 21C10.5 16 15 14 23.5 14S37 16 37 21S32 28 23.5 28S10.5 26 10.5 21Z" fill="#0b57d0"/></svg>
<svg style="position:absolute;left:987.2px;top:1142px;" width="47" height="47" viewBox="0 0 47 47"><defs><linearGradient id="gp" x1="0" y1="0" x2="1" y2="1"><stop offset="0" stop-color="#7b3ff0"/><stop offset="1" stop-color="#4a1fc8"/></linearGradient></defs><path d="M23.5 0C41.5 0 47 5.5 47 23.5S41.5 47 23.5 47S0 41.5 0 23.5S5.5 0 23.5 0Z" fill="url(#gp)"/>
<circle cx="23.5" cy="23.5" r="11.5" fill="#ececec"/><path d="M36 9.5C38.5 11 33 19 25 27S11 38.5 9.5 36.5C8.5 35 11 31 13.5 28" fill="none" stroke="#5aaee8" stroke-width="2.6" stroke-linecap="round"/></svg>
<svg style="position:absolute;left:1060.4px;top:1142px;" width="47" height="47" viewBox="0 0 47 47"><defs><linearGradient id="gc" x1="0" y1="0" x2="0" y2="1"><stop offset="0" stop-color="#d8d8d8"/><stop offset="1" stop-color="#a8a8a8"/></linearGradient></defs><path d="M23.5 0C41.5 0 47 5.5 47 23.5S41.5 47 23.5 47S0 41.5 0 23.5S5.5 0 23.5 0Z" fill="url(#gc)"/>
<rect x="7.5" y="9" width="32" height="29" rx="3" fill="#ededed"/><circle cx="23.5" cy="23.5" r="9.6" fill="#1e1e1e"/><circle cx="23.5" cy="23.5" r="5.2" fill="#2c2c2c"/><circle cx="23.5" cy="23.5" r="1.8" fill="#111"/><path d="M17.5 20A7 7 0 0 1 22 16.5" stroke="#2f8fd0" stroke-width="1.5" fill="none"/><circle cx="11.5" cy="13" r="1.3" fill="#e04040"/></svg>
<div style="position:absolute;left:1131.5px;top:1150px;width:1.6px;height:29px;background:#9a9a9a"></div>
<svg style="position:absolute;left:1160.3px;top:1142px;" width="47" height="47" viewBox="0 0 47 47"><path d="M23.5 0C41.5 0 47 5.5 47 23.5S41.5 47 23.5 47S0 41.5 0 23.5S5.5 0 23.5 0Z" fill="#ebebeb"/><path d="M32.27 15.83A11.0 11.0 0 0 0 13.63 17.95" stroke="#ea4335" stroke-width="5.6" fill="none"/><path d="M13.63 17.95A11.0 11.0 0 0 0 14.59 28.91" stroke="#fbbc05" stroke-width="5.6" fill="none"/><path d="M14.59 28.91A11.0 11.0 0 0 0 32.93 28.43" stroke="#34a853" stroke-width="5.6" fill="none"/><path d="M32.93 28.43A11.0 11.0 0 0 0 34.59 22.22" stroke="#4285f4" stroke-width="5.6" fill="none"/><rect x="23.60" y="19.80" width="13.80" height="5.6" fill="#4285f4"/></svg>
<svg style="position:absolute;left:1235px;top:1142px;" width="47" height="47" viewBox="0 0 47 47"><clipPath id="cq"><path d="M23.5 0C41.5 0 47 5.5 47 23.5S41.5 47 23.5 47S0 41.5 0 23.5S5.5 0 23.5 0Z"/></clipPath><g clip-path="url(#cq)"><rect width="47" height="47" fill="#ececec"/><rect width="47" height="17" fill="#17a6a0"/><path d="M0 17H47V18.5H0Z" fill="#17a6a0"/></g>
<rect x="6" y="15" width="1.8" height="5" rx=".9" fill="#17a6a0"/><rect x="39.2" y="15" width="1.8" height="5" rx=".9" fill="#17a6a0"/>
<text x="23.5" y="11.5" font-family="Liberation Sans" font-size="8" font-weight="700" fill="#e8f6f5" text-anchor="middle">SO.</text>
<text x="23.5" y="39" font-family="Liberation Sans" font-size="23" font-weight="700" fill="#111" text-anchor="middle">3</text></svg>
<svg style="position:absolute;left:1480px;top:1140px;" width="340" height="50" viewBox="0 0 340 50"><g stroke="#fff" stroke-width="2.2" fill="none" stroke-linecap="round">
<path d="M21.9 14.5V36.5M31.5 14.5V36.5M41.25 14.5V36.5"/>
<rect x="158.7" y="14.5" width="22" height="22" rx="8"/>
<path d="M314.6 13.5L301.6 25.4L314.6 37.3"/>
</g></svg>
</body></html>
